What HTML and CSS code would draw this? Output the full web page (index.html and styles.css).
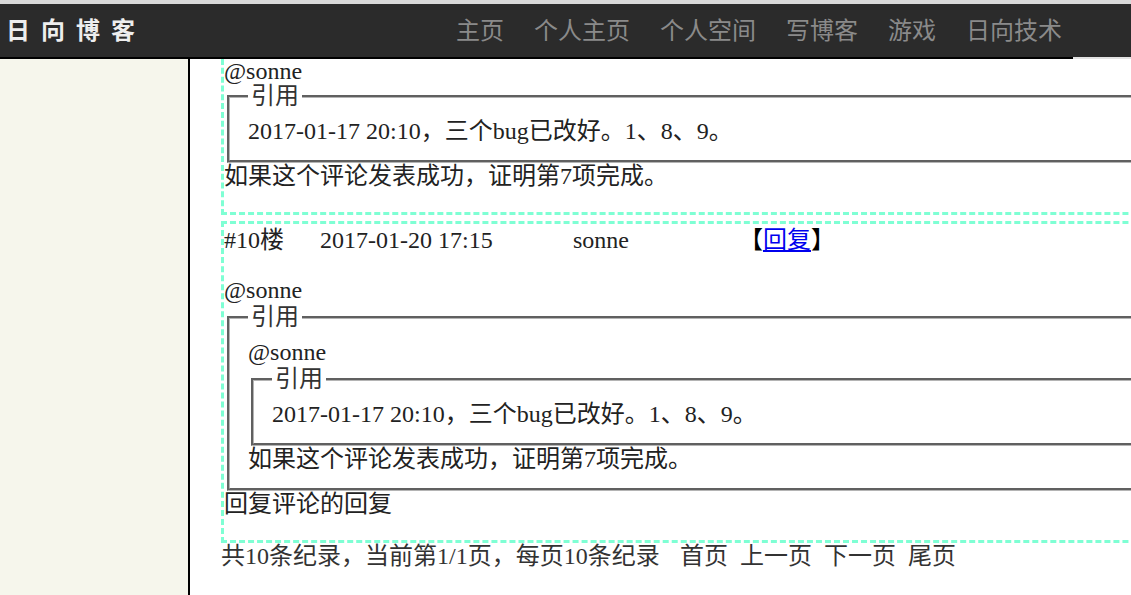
FILE: index.html
```html
<!DOCTYPE html>
<html lang="zh-CN">
<head>
<meta charset="utf-8">
<title>日向博客</title>
<link rel="stylesheet" href="styles.css">
</head>
<body>
<header class="topbar">
  <div class="bar">
    <div class="brand">日向博客</div>
    <nav class="nav">
      <a href="#">主页</a>
      <a href="#">个人主页</a>
      <a href="#">个人空间</a>
      <a href="#">写博客</a>
      <a href="#">游戏</a>
      <a href="#">日向技术</a>
    </nav>
  </div>
  <div class="rule"><div class="rule-line"></div></div>
</header>
<div class="main">
  <aside class="sidebar"></aside>
  <section class="content">
    <div class="comment comment-tail">
      <div class="body">
        <div class="line lead">@sonne</div>
        <fieldset class="quote">
          <legend>引用</legend>
          <div class="line">2017-01-17 20:10，三个bug已改好。1、8、9。</div>
        </fieldset>
        <div class="line">如果这个评论发表成功，证明第7项完成。</div>
      </div>
    </div>
    <div class="comment">
      <div class="meta">
        <span class="floor">#10楼</span><span class="time">2017-01-20 17:15</span><span class="user">sonne</span><span class="reply">【<a href="#">回复</a>】</span>
      </div>
      <div class="body body-gap">
        <div class="line">@sonne</div>
        <fieldset class="quote">
          <legend>引用</legend>
          <div class="line">@sonne</div>
          <fieldset class="quote">
            <legend>引用</legend>
            <div class="line">2017-01-17 20:10，三个bug已改好。1、8、9。</div>
          </fieldset>
          <div class="line">如果这个评论发表成功，证明第7项完成。</div>
        </fieldset>
        <div class="line">回复评论的回复</div>
      </div>
    </div>
    <div class="pager">
      <span class="summary">共10条纪录，当前第1/1页，每页10条纪录</span>
      <span>首页</span>
      <span>上一页</span>
      <span>下一页</span>
      <span>尾页</span>
    </div>
  </section>
</div>
</body>
</html>
```
FILE: styles.css
```css
html, body {
  margin: 0;
  padding: 0;
  overflow: hidden;
  background: #ffffff;
}

body {
  width: 1131px;
  height: 595px;
  font-family: "Liberation Serif", "Noto Sans CJK SC", serif;
  font-size: 24px;
  line-height: 27px;
  color: #222222;
}

/* ---------- header ---------- */
.topbar {
  border-top: 4px solid #d9d9d9;
}

.bar {
  display: flex;
  align-items: center;
  height: 53px;
  background: #2b2b2b;
  font-family: "Noto Sans CJK SC", sans-serif;
}

.brand {
  padding-left: 6px;
  margin-bottom: 4px;
  font-size: 24px;
  font-weight: 700;
  letter-spacing: 11px;
  color: #eeeeee;
  line-height: 49px;
}

.nav {
  display: flex;
  gap: 30px;
  margin-left: auto;
  margin-bottom: 4px;
  padding-right: 69px;
}

.nav a {
  font-size: 24px;
  line-height: 49px;
  color: #8a8a8a;
  text-decoration: none;
}

.rule {
  height: 2px;
  background: #e2e2e2;
}

.rule-line {
  width: 1073px;
  height: 2px;
  background: #000000;
}

/* ---------- main ---------- */
.main {
  display: flex;
  height: 536px;
  overflow: hidden;
}

.sidebar {
  flex: none;
  width: 188px;
  background: #f6f6ec;
  border-right: 2px solid #000000;
}

.content {
  flex: none;
  width: 1250px;
  padding-left: 31px;
}

.comment {
  border: 3px dashed #7fffd4;
  padding: 3px 0 22px 0;
}

.comment + .comment {
  margin-top: 6px;
}

.comment-tail {
  border-top: none;
  padding-top: 0;
}

.lead {
  line-height: 24px;
}

.meta {
  display: flex;
  white-space: nowrap;
}

.floor {
  width: 96px;
}

.time {
  width: 253px;
}

.user {
  width: 166px;
}

.reply {
  color: #000000;
}

.reply a {
  color: #0000ee;
  text-decoration: underline;
}

.body-gap {
  margin-top: 23px;
}

.line {
  white-space: nowrap;
}

.quote {
  margin: 0 3px;
  padding: 8px 18px 15px 18px;
  border: 3px groove #b4b4b4;
  min-inline-size: 0;
}

.quote legend {
  padding: 0 3px;
  color: #333333;
}

/* ---------- pager ---------- */
.pager {
  display: flex;
  gap: 12px;
  white-space: nowrap;
  color: #333333;
}

.summary {
  width: 447px;
}
```
